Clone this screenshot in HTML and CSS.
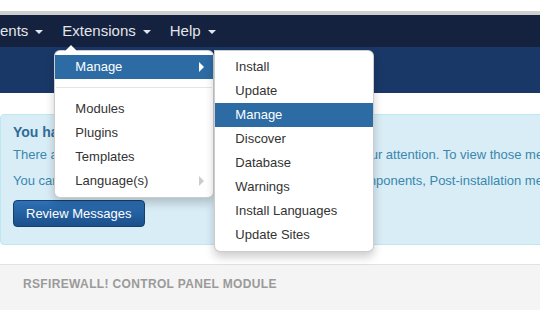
FILE: index.html
```html
<!DOCTYPE html>
<html lang="en">
<head>
<meta charset="utf-8">
<title>Extensions menu</title>
<link rel="stylesheet" href="styles.css">
</head>
<body>
<div class="topstrip"></div>
<header class="navbar">
  <ul class="nav">
    <li class="nav-item first">ents<span class="caret"></span></li>
    <li class="nav-item open">Extensions<span class="caret"></span>
      <ul class="dropdown">
        <li class="dd-item active has-sub">Manage
          <ul class="dropdown sub">
            <li class="dd-item">Install</li>
            <li class="dd-item">Update</li>
            <li class="dd-item active">Manage</li>
            <li class="dd-item">Discover</li>
            <li class="dd-item">Database</li>
            <li class="dd-item">Warnings</li>
            <li class="dd-item">Install Languages</li>
            <li class="dd-item">Update Sites</li>
          </ul>
        </li>
        <li class="divider"></li>
        <li class="dd-item">Modules</li>
        <li class="dd-item">Plugins</li>
        <li class="dd-item">Templates</li>
        <li class="dd-item has-sub muted">Language(s)</li>
      </ul>
    </li>
    <li class="nav-item">Help<span class="caret"></span></li>
  </ul>
</header>
<div class="subhead"></div>
<main class="content">
  <div class="alert">
    <h4 class="alert-heading">You have post-installation messages</h4>
    <p>There are important post-installation messages that require your attention. To view those messages please click the Review Messages button below.</p>
    <p>You can review the messages any time you want from the Components, Post-installation messages menu item.</p>
    <div class="actions"><button class="btn">Review Messages</button></div>
  </div>
</main>
<section class="module">
  <h2 class="module-title">RSFIREWALL! CONTROL PANEL MODULE</h2>
</section>
</body>
</html>
```
FILE: styles.css
```css
html, body {
  margin: 0;
  padding: 0;
  background: #fff;
  overflow: hidden;
}
body {
  width: 540px;
  height: 311px;
  font-family: "Liberation Sans", Arial, sans-serif;
  font-size: 13px;
  color: #333;
}
ul {
  list-style: none;
  margin: 0;
  padding: 0;
}
.topstrip {
  height: 11px;
  background: #fff;
}
.navbar {
  height: 32px;
  background: #14223f;
  border-top: 4px solid #cfcfcf;
}
.nav {
  display: flex;
  height: 32px;
}
.nav-item {
  position: relative;
  display: flex;
  align-items: center;
  padding: 0 9.5px;
  font-size: 15px;
  line-height: 32px;
  color: #e2e5ea;
}
.nav-item.first {
  padding-left: 0;
}
.caret {
  display: inline-block;
  width: 0;
  height: 0;
  margin-left: 7px;
  margin-top: 2px;
  border-top: 4px solid #e2e5ea;
  border-left: 4px solid transparent;
  border-right: 4px solid transparent;
}
.dropdown {
  position: absolute;
  top: 35px;
  left: 1.5px;
  width: 160px;
  box-sizing: border-box;
  padding: 4px 0;
  background: #fff;
  border: 1px solid rgba(0, 0, 0, 0.2);
  border-radius: 6px;
  box-shadow: 0 5px 10px rgba(0, 0, 0, 0.2);
  font-size: 13px;
  line-height: 24px;
  color: #333;
  z-index: 10;
}
.dropdown::before {
  content: "";
  position: absolute;
  top: -7px;
  left: 9px;
  border-left: 7px solid transparent;
  border-right: 7px solid transparent;
  border-bottom: 7px solid rgba(0, 0, 0, 0.2);
}
.dropdown::after {
  content: "";
  position: absolute;
  top: -6px;
  left: 10px;
  border-left: 6px solid transparent;
  border-right: 6px solid transparent;
  border-bottom: 6px solid #fff;
}
.dropdown.sub {
  top: -5px;
  left: 159px;
  border-radius: 0 6px 6px 6px;
}
.dropdown.sub::before,
.dropdown.sub::after {
  display: none;
}
.dd-item {
  height: 24px;
  padding: 0 20px;
  white-space: nowrap;
  color: #333;
}
.dd-item.has-sub {
  position: relative;
}
.dd-item.has-sub::after {
  content: "";
  position: absolute;
  top: 7px;
  right: 9px;
  border-top: 5px solid transparent;
  border-bottom: 5px solid transparent;
  border-left: 5px solid #ccc;
}
.dd-item.active {
  background: #2c6ba3;
  color: #fff;
}
.dd-item.active.has-sub::after {
  border-left-color: #fff;
}
.dd-item.has-sub .dd-item {
  color: #333;
}
.dd-item.has-sub .dd-item.active {
  color: #fff;
}
.divider {
  height: 1px;
  margin: 8px 1px;
  background: #e5e5e5;
  border-bottom: 1px solid #fff;
}
.subhead {
  height: 46px;
  background: #1a3867;
}
.content {
  padding-top: 21px;
}
.alert {
  margin-right: -40px;
  padding: 7px 14px 17px 12px;
  background: #d9edf7;
  border: 1px solid #bce8f1;
  border-radius: 4px;
  color: #3a87ad;
  white-space: nowrap;
  overflow: hidden;
}
.alert-heading {
  margin: 0 0 4px;
  font-size: 14px;
  line-height: 20px;
  font-weight: bold;
  color: #2f6c98;
}
.alert p {
  margin: 0 0 8px;
  line-height: 18px;
}
.actions {
  padding-top: 2px;
}
.btn {
  display: block;
  height: 27px;
  padding: 0 12px;
  font-family: inherit;
  font-size: 13px;
  line-height: 25px;
  color: #fff;
  background: linear-gradient(#2d71b6, #1b4f8b);
  border: 1px solid #173e6c;
  border-radius: 4px;
}
.module {
  margin-top: 19px;
  height: 34px;
  background: #f4f4f4;
  border-top: 1px solid #e2e2e2;
  padding: 11px 0 0 23px;
}
.module-title {
  margin: 0;
  font-size: 12px;
  line-height: 16px;
  letter-spacing: 0.35px;
  font-weight: bold;
  color: #9a9a9a;
}
```
